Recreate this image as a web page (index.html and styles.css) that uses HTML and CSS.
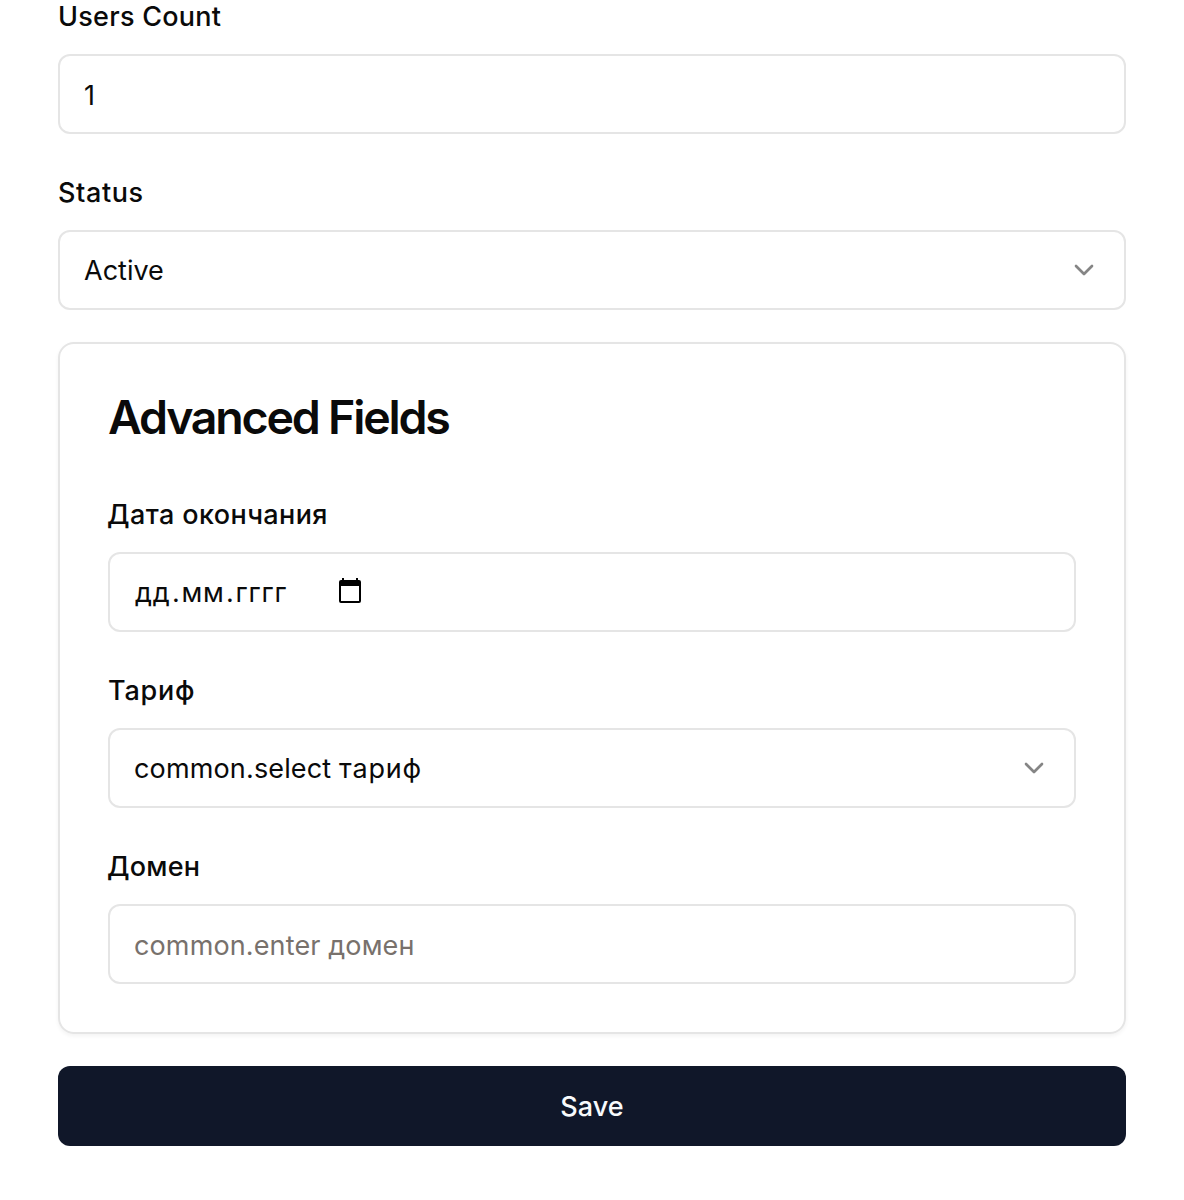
FILE: index.html
```html
<!DOCTYPE html>
<html lang="ru">
<head>
<meta charset="utf-8">
<title>Edit</title>
<link rel="stylesheet" href="styles.css">
</head>
<body>
<form class="form">
  <div class="field">
    <div class="label"><span class="t-users">Users Count</span></div>
    <div class="control input"><span class="t-one">1</span></div>
  </div>
  <div class="field">
    <div class="label"><span class="t-status">Status</span></div>
    <div class="control"><span class="t-active">Active</span>
      <svg class="chevron" viewBox="0 0 32 32"><path d="M8 12l8 8 8-8"/></svg>
    </div>
  </div>
  <section class="card">
    <h2 class="title">Advanced Fields</h2>
    <div class="field">
      <div class="label"><span class="t-date">Дата окончания</span></div>
      <div class="control"><span class="t-mask">дд<i>.</i>мм<i>.</i>гггг</span>
        <svg class="calendar" viewBox="0 0 24 26"><path d="M4 0h2v2h12V0h2v2h1a2 2 0 0 1 2 2v19a2 2 0 0 1-2 2H3a2 2 0 0 1-2-2V4a2 2 0 0 1 2-2h1zM3 8v15h18V8z" fill-rule="evenodd"/></svg>
      </div>
    </div>
    <div class="field">
      <div class="label"><span class="t-tariff">Тариф</span></div>
      <div class="control"><span class="t-select">common.select <b>тариф</b></span>
        <svg class="chevron" viewBox="0 0 32 32"><path d="M8 12l8 8 8-8"/></svg>
      </div>
    </div>
    <div class="field">
      <div class="label"><span class="t-domain">Домен</span></div>
      <div class="control input placeholder"><span class="t-enter">common.enter домен</span></div>
    </div>
  </section>
  <button class="save" type="button">Save</button>
</form>
</body>
</html>
```
FILE: styles.css
```css
* { box-sizing: border-box; }
body {
  margin: 0;
  background: #fff;
  color: #0a0a0a;
  font-family: Inter, "Liberation Sans", sans-serif;
  font-size: 27px;
  line-height: 40px;
}
.form { padding: 0 58px; height: 1200px; overflow: hidden; }
.form > .field:first-child .label { height: 54px; padding-top: 0; line-height: 34px; }
.label {
  height: 64px;
  padding-top: 7px;
  font-weight: 500;
}
.field + .field { margin-top: 32px; }
.control {
  display: flex;
  align-items: center;
  height: 80px;
  padding: 0 24px;
  border: 2px solid #e5e5e5;
  border-radius: 12px;
}
.control span { padding-top: 1px; }
.input span { padding-top: 3px; }
.t-users { letter-spacing: 0.27px; }
.t-status { letter-spacing: 0.6px; }
.t-date { letter-spacing: 0.4px; margin-left: -1px; }
.t-tariff { letter-spacing: 0.8px; }
.t-select { letter-spacing: 0.15px; }
.t-select b { font-weight: 400; letter-spacing: 0.8px; }
.t-domain { letter-spacing: 0.2px; margin-left: -1px; }
.t-enter { letter-spacing: 0.13px; }
.t-mask { width: 152px; padding-left: 1px; letter-spacing: 0.75px; white-space: nowrap; }
.t-mask i { font-style: normal; padding: 0 1px 0 1.5px; }
.chevron {
  width: 32px;
  height: 32px;
  margin-left: auto;
  fill: none;
  stroke: #858585;
  stroke-width: 2.67;
  stroke-linecap: round;
  stroke-linejoin: round;
}
.card {
  margin: 32px 0;
  height: 692px;
  padding: 48px;
  border: 2px solid #e5e5e5;
  border-radius: 16px;
  box-shadow: 0 2px 4px rgba(0, 0, 0, 0.05);
}
.title {
  margin: 0 0 47px;
  padding-top: 1px;
  font-size: 46.5px;
  line-height: 48px;
  font-weight: 600;
  letter-spacing: -2.2px;
}
.calendar { width: 24px; height: 26px; margin: 0 0 2px 52px; fill: #000; }
.placeholder { color: #78716c; }
.save {
  display: flex;
  align-items: center;
  justify-content: center;
  width: 100%;
  height: 80px;
  padding: 1px 0 0;
  border: 0;
  border-radius: 12px;
  background: #101729;
  color: #f8fafc;
  font: 500 27px/40px Inter, sans-serif;
  letter-spacing: 0.1px;
}
```
